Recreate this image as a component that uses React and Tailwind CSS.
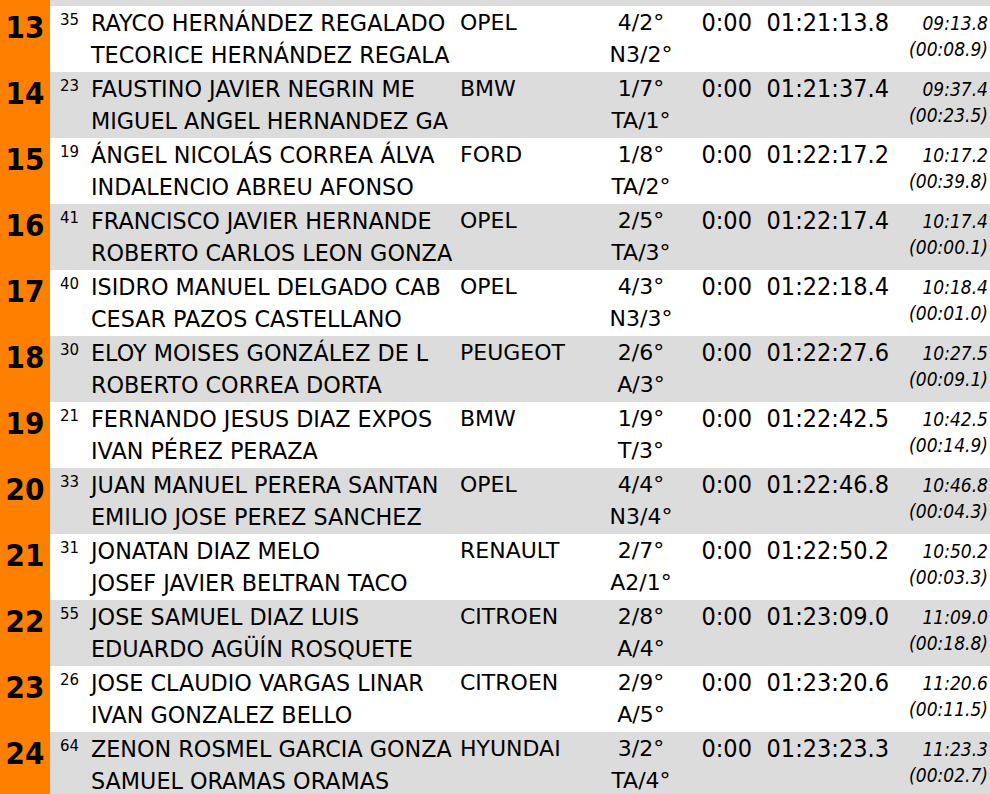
const rows = [
  ['13', '35', 'RAYCO HERNÁNDEZ REGALADO', 'TECORICE HERNÁNDEZ REGALA', 'OPEL', '4/2°', 'N3/2°', '01:21:13.8', '09:13.8', '(00:08.9)'],
  ['14', '23', 'FAUSTINO JAVIER NEGRIN ME', 'MIGUEL ANGEL HERNANDEZ GA', 'BMW', '1/7°', 'TA/1°', '01:21:37.4', '09:37.4', '(00:23.5)'],
  ['15', '19', 'ÁNGEL NICOLÁS CORREA ÁLVA', 'INDALENCIO ABREU AFONSO', 'FORD', '1/8°', 'TA/2°', '01:22:17.2', '10:17.2', '(00:39.8)'],
  ['16', '41', 'FRANCISCO JAVIER HERNANDE', 'ROBERTO CARLOS LEON GONZA', 'OPEL', '2/5°', 'TA/3°', '01:22:17.4', '10:17.4', '(00:00.1)'],
  ['17', '40', 'ISIDRO MANUEL DELGADO CAB', 'CESAR PAZOS CASTELLANO', 'OPEL', '4/3°', 'N3/3°', '01:22:18.4', '10:18.4', '(00:01.0)'],
  ['18', '30', 'ELOY MOISES GONZÁLEZ DE L', 'ROBERTO CORREA DORTA', 'PEUGEOT', '2/6°', 'A/3°', '01:22:27.6', '10:27.5', '(00:09.1)'],
  ['19', '21', 'FERNANDO JESUS DIAZ EXPOS', 'IVAN PÉREZ PERAZA', 'BMW', '1/9°', 'T/3°', '01:22:42.5', '10:42.5', '(00:14.9)'],
  ['20', '33', 'JUAN MANUEL PERERA SANTAN', 'EMILIO JOSE PEREZ SANCHEZ', 'OPEL', '4/4°', 'N3/4°', '01:22:46.8', '10:46.8', '(00:04.3)'],
  ['21', '31', 'JONATAN DIAZ MELO', 'JOSEF JAVIER BELTRAN TACO', 'RENAULT', '2/7°', 'A2/1°', '01:22:50.2', '10:50.2', '(00:03.3)'],
  ['22', '55', 'JOSE SAMUEL DIAZ LUIS', 'EDUARDO AGÜÍN ROSQUETE', 'CITROEN', '2/8°', 'A/4°', '01:23:09.0', '11:09.0', '(00:18.8)'],
  ['23', '26', 'JOSE CLAUDIO VARGAS LINAR', 'IVAN GONZALEZ BELLO', 'CITROEN', '2/9°', 'A/5°', '01:23:20.6', '11:20.6', '(00:11.5)'],
  ['24', '64', 'ZENON ROSMEL GARCIA GONZA', 'SAMUEL ORAMAS ORAMAS', 'HYUNDAI', '3/2°', 'TA/4°', '01:23:23.3', '11:23.3', '(00:02.7)'],
];

// names/brand use the wide face, numbers the condensed one (narrow digits like the original)
const wide = "font-['DejaVu_Sans',sans-serif]";
const narrow = "font-['DejaVu_Sans_Condensed','DejaVu_Sans',sans-serif]";

function Row({ r, i }) {
  const [pos, dorsal, driver, codriver, brand, cls1, cls2, time, diff1, diff2] = r;
  const bg = i % 2 === 0 ? 'bg-white' : 'bg-[#dcdcdc]';
  return (
    <div className={`flex h-[66px] ${bg}`}>
      <div className={`w-[50px] shrink-0 bg-[#ff8000] text-center text-[31px] font-bold leading-none pt-[6px] ${narrow}`}>{pos}</div>
      <div className={`w-[41px] shrink-0 pl-[10px] pt-[7px] text-[15px] leading-none ${wide}`}>{dorsal}</div>
      <div className={`w-[369px] shrink-0 whitespace-nowrap text-[22.3px] leading-[32px] pt-[1px] ${wide}`}>
        <div>{driver}</div>
        <div>{codriver}</div>
      </div>
      <div className={`w-[130px] shrink-0 text-[22px] leading-[32px] pt-[1px] ${wide}`}>{brand}</div>
      <div className={`w-[102px] shrink-0 text-center text-[22px] leading-[32px] pt-[1px] ${wide}`}>
        <div>{cls1}</div>
        <div>{cls2}</div>
      </div>
      <div className={`w-[60px] shrink-0 text-right text-[25px] leading-[32px] pt-[1px] ${narrow}`}>0:00</div>
      <div className={`w-[137px] shrink-0 text-right text-[25px] leading-[32px] pt-[1px] ${narrow}`}>{time}</div>
      <div className={`flex-1 text-right italic text-[19px] leading-[26px] pt-[4px] pr-[2px] ${narrow}`}>
        <div>{diff1}</div>
        <div>{diff2}</div>
      </div>
    </div>
  );
}

export default function App() {
  return (
    <div className="w-[990px] h-[794px] overflow-hidden bg-white text-black">
      <div className="flex h-[6px] bg-[#dcdcdc]">
        <div className="w-[50px] bg-[#ff8000]" />
      </div>
      {rows.map((r, i) => (
        <Row key={r[0]} r={r} i={i} />
      ))}
    </div>
  );
}
